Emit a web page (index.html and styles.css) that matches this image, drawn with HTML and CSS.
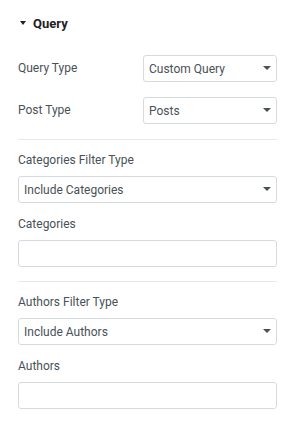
FILE: index.html
```html
<!DOCTYPE html>
<html>
<head>
    <title>Query</title>
    <meta charset="UTF-8">
    <meta name="viewport" content="width=device-width, initial-scale=1.0">
    <link rel="stylesheet" href="styles.css">
</head>
<body>
    <div class="panel">
        <div class="section-head">
            <span class="caret"></span>
            <span class="section-title">Query</span>
        </div>

        <div class="controls">
            <div class="control inline">
                <label>Query Type</label>
                <div class="select-wrap">
                    <select>
                        <option>Custom Query</option>
                    </select>
                </div>
            </div>

            <div class="control inline">
                <label>Post Type</label>
                <div class="select-wrap">
                    <select>
                        <option>Posts</option>
                    </select>
                </div>
            </div>

            <div class="separator"></div>

            <div class="control">
                <label>Categories Filter Type</label>
                <div class="select-wrap">
                    <select>
                        <option>Include Categories</option>
                    </select>
                </div>
            </div>

            <div class="control">
                <label>Categories</label>
                <input type="text" class="text-input">
            </div>

            <div class="separator"></div>

            <div class="control">
                <label>Authors Filter Type</label>
                <div class="select-wrap">
                    <select>
                        <option>Include Authors</option>
                    </select>
                </div>
            </div>

            <div class="control">
                <label>Authors</label>
                <input type="text" class="text-input">
            </div>
        </div>
    </div>
</body>
</html>
```

FILE: styles.css
```css
body {
    font-family: Roboto, 'Liberation Sans', Arial, sans-serif;
    margin: 0;
    background-color: #ffffff;
    color: #495157;
}

.panel {
    padding: 15px 18px 0;
}

.section-head {
    display: flex;
    align-items: center;
    gap: 7px;
    height: 16px;
    padding-left: 2px;
}

.caret {
    width: 0;
    height: 0;
    border-left: 3px solid transparent;
    border-right: 3px solid transparent;
    border-top: 4px solid #1f2124;
}

.section-title {
    font-size: 13px;
    font-weight: 700;
    color: #1f2124;
}

.controls {
    margin-top: 24px;
}

.control {
    margin-bottom: 14px;
}

.control label {
    display: block;
    font-size: 12px;
    line-height: 15px;
    margin-bottom: 8px;
}

.control.inline {
    display: flex;
    align-items: center;
    justify-content: space-between;
    margin-bottom: 15px;
}

.control.inline label {
    margin-bottom: 0;
}

.control.inline .select-wrap {
    width: 134px;
}

.select-wrap {
    position: relative;
}

.select-wrap select {
    appearance: none;
    -webkit-appearance: none;
    width: 100%;
    height: 27px;
    margin: 0;
    padding: 0 20px 0 5px;
    border: 1px solid #d5dadf;
    border-radius: 3px;
    background-color: #ffffff;
    font-family: inherit;
    font-size: 12px;
    color: #495157;
    box-sizing: border-box;
}

.select-wrap::after {
    content: "";
    position: absolute;
    right: 6px;
    top: 11px;
    width: 0;
    height: 0;
    border-left: 4px solid transparent;
    border-right: 4px solid transparent;
    border-top: 4px solid #495157;
    pointer-events: none;
}

.text-input {
    display: block;
    width: 100%;
    height: 27px;
    margin: 0;
    border: 1px solid #d5dadf;
    border-radius: 3px;
    box-sizing: border-box;
    font-family: inherit;
    font-size: 12px;
}

.separator {
    height: 1px;
    background-color: #e6e9ec;
    margin: 1px 0 13px;
}
```
